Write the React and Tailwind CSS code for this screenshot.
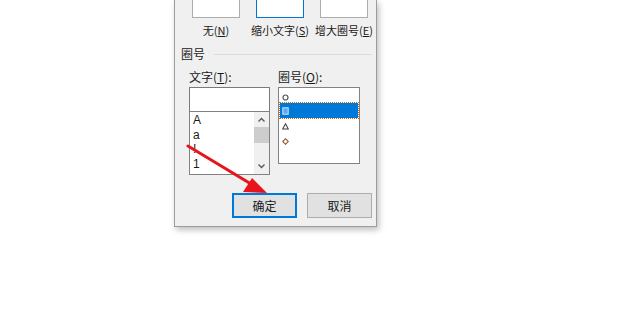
import React from "react";

const font = { fontFamily: '"Noto Sans CJK SC", "Liberation Sans", sans-serif' };

function Preview({ active }) {
  return (
    <div
      className={
        "h-[18px] bg-white border-x border-b " +
        (active ? "w-[48px] border-2 border-t-0 border-[#0078d7]" : "w-[48px] border-[#adadad]")
      }
    />
  );
}

function App() {
  return (
    <div className="relative w-[620px] h-[309px] bg-white overflow-hidden text-[12px] text-[#1a1a1a]" style={font}>
      <div className="ml-[174px] w-[203px] h-[227px] bg-[#f0f0f0] border-x border-b border-[#9c9c9c] shadow-[2px_3px_6px_rgba(0,0,0,0.25)]">
        {/* preview buttons */}
        <div className="flex pl-[17px] gap-[16px]">
          <Preview />
          <Preview active />
          <Preview />
        </div>
        <div className="flex pl-[17px] gap-[16px] mt-[4px] leading-[16px] text-[11px]">
          <div className="w-[48px] text-center">无(<span className="underline">N</span>)</div>
          <div className="w-[48px] text-center whitespace-nowrap flex justify-center">缩小文字(<span className="underline">S</span>)</div>
          <div className="w-[48px] text-center whitespace-nowrap flex justify-center">增大圈号(<span className="underline">E</span>)</div>
        </div>

        {/* group header */}
        <div className="flex items-center mt-[8px] pl-[6px] pr-[4px] leading-[16px]">
          <span>圈号</span>
          <div className="flex-1 ml-[9px] h-px bg-[#dcdcdc]" />
        </div>

        <div className="flex pl-[14px] mt-[7px]">
          {/* text column */}
          <div className="w-[81px]">
            <div className="leading-[16px]">文字(<span className="underline">T</span>):</div>
            <div className="mt-[2px] h-[24px] bg-white border border-[#7a7a7a] border-b-0" />
            <div className="flex h-[64px] bg-white border border-[#828282]">
              <div className="flex-1 pl-[3px] pt-[1px] text-[12px] leading-[14.5px]" style={{ fontFamily: '"Liberation Sans", sans-serif' }}>
                <div>A</div>
                <div>a</div>
                <div>!</div>
                <div>1</div>
              </div>
              <div className="w-[15px] flex flex-col items-center bg-[#f0f0f0] text-[#606060]">
                <svg width="9" height="15" viewBox="0 0 9 15"><path d="M1.5 9.5 L4.5 6.5 L7.5 9.5" fill="none" stroke="#555" strokeWidth="1.3" /></svg>
                <div className="w-[15px] h-[16px] bg-[#cdcdcd]" />
                <div className="flex-1" />
                <svg width="9" height="15" viewBox="0 0 9 15"><path d="M1.5 5.5 L4.5 8.5 L7.5 5.5" fill="none" stroke="#555" strokeWidth="1.3" /></svg>
              </div>
            </div>
          </div>

          {/* shape column */}
          <div className="ml-[8px] w-[82px]">
            <div className="leading-[16px]">圈号(<span className="underline">O</span>):</div>
            <div className="mt-[2px] h-[77px] bg-white border border-[#828282] pt-[3px] px-[1px]">
              <div className="h-[12px] flex items-center pl-[2px]">
                <svg width="7" height="7" viewBox="0 0 7 7"><circle cx="3.5" cy="3.5" r="2.5" fill="none" stroke="#555" strokeWidth="1.2" /></svg>
              </div>
              <div className="h-[15px] flex items-center pl-[2px] bg-[#0078d7] outline outline-1 outline-dotted outline-[#c06a1c]">
                <svg width="7" height="8" viewBox="0 0 7 8"><rect x="0.8" y="0.8" width="5.4" height="6.4" fill="#5aa8f0" stroke="#cfe6ff" strokeWidth="1" /></svg>
              </div>
              <div className="h-[15px] mt-[1px] flex items-center pl-[2px]">
                <svg width="7" height="7" viewBox="0 0 7 7"><path d="M3.5 0.8 L6.3 6 L0.7 6 Z" fill="none" stroke="#444" strokeWidth="1.1" /></svg>
              </div>
              <div className="h-[14px] flex items-center pl-[2px]">
                <svg width="7" height="7" viewBox="0 0 7 7"><path d="M3.5 0.7 L6.3 3.5 L3.5 6.3 L0.7 3.5 Z" fill="none" stroke="#8a5a3a" strokeWidth="1.1" /></svg>
              </div>
            </div>
          </div>
        </div>

        {/* buttons */}
        <div className="flex pl-[57px] gap-[10px] mt-[18px]">
          <div className="w-[65px] h-[25px] flex items-center justify-center bg-[#e1e1e1] border-2 border-[#0078d7]">确定</div>
          <div className="w-[65px] h-[25px] flex items-center justify-center bg-[#e1e1e1] border border-[#adadad]">取消</div>
        </div>
      </div>

      {/* red arrow annotation */}
      <svg className="absolute left-0 top-0" width="620" height="309" viewBox="0 0 620 309">
        <line x1="188" y1="146" x2="256" y2="187" stroke="#e8141b" strokeWidth="3" strokeLinecap="round" />
        <path d="M267 193 L243 192 L252 178 Z" fill="#e8141b" />
      </svg>
    </div>
  );
}

export default App;
